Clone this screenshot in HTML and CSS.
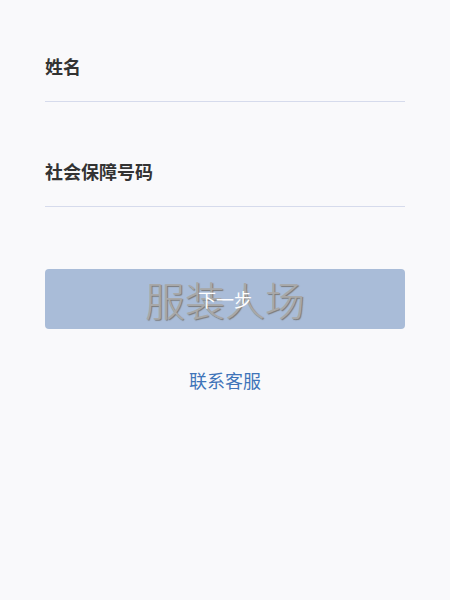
FILE: index.html
```html
<!DOCTYPE html>
<html lang="zh-CN">
<head>
    <meta charset="UTF-8">
    <meta name="viewport" content="width=device-width, initial-scale=1.0">
    <title>实名认证</title>
    <link rel="stylesheet" href="styles.css">
</head>
<body>
    <form class="form">
        <div class="field">
            <label class="label" for="name">姓名</label>
            <input class="input" id="name" type="text">
        </div>

        <div class="field">
            <label class="label" for="ssn">社会保障号码</label>
            <input class="input" id="ssn" type="text">
        </div>

        <div class="submit-wrap">
            <!-- watermark sits under the button text -->
            <span class="watermark">服装人场</span>
            <button class="submit" type="button" disabled>下一步</button>
        </div>

        <a class="service" href="#">联系客服</a>
    </form>
</body>
</html>
```

FILE: styles.css
```css
body {
    margin: 0;
    padding: 54px 45px 0;
    background-color: #f9f9fb;
    font-family: "Noto Sans CJK SC", "Noto Sans", sans-serif;
    color: #333;
}

.form {
    display: flex;
    flex-direction: column;
}

.field {
    display: flex;
    flex-direction: column;
    margin-bottom: 57px;
}

.label {
    font-size: 18px;
    line-height: 24px;
    font-weight: bold;
    color: #333;
}

.input {
    height: 23px;
    padding: 0;
    border: none;
    border-bottom: 1px solid #d6dbec;
    background: none;
    outline: none;
    font-size: 16px;
    font-family: inherit;
}

.submit-wrap {
    position: relative;
    margin-top: 5px;
    border-radius: 4px;
    background-color: #a9bcd8;
}

.submit {
    position: relative;
    display: block;
    width: 100%;
    height: 60px;
    border: none;
    border-radius: 4px;
    background: none;
    color: #fff;
    font-size: 18px;
    font-family: inherit;
}

.watermark {
    position: absolute;
    top: 0;
    left: 0;
    right: 0;
    height: 60px;
    line-height: 60px;
    text-align: center;
    font-size: 40px;
    font-weight: 300;
    color: #a8a8a8;
    text-shadow: 1px 1px 1px #7a7a7a;
    pointer-events: none;
}

.service {
    margin-top: 39px;
    text-align: center;
    font-size: 18px;
    line-height: 24px;
    color: #3f74b9;
    text-decoration: none;
}
```
